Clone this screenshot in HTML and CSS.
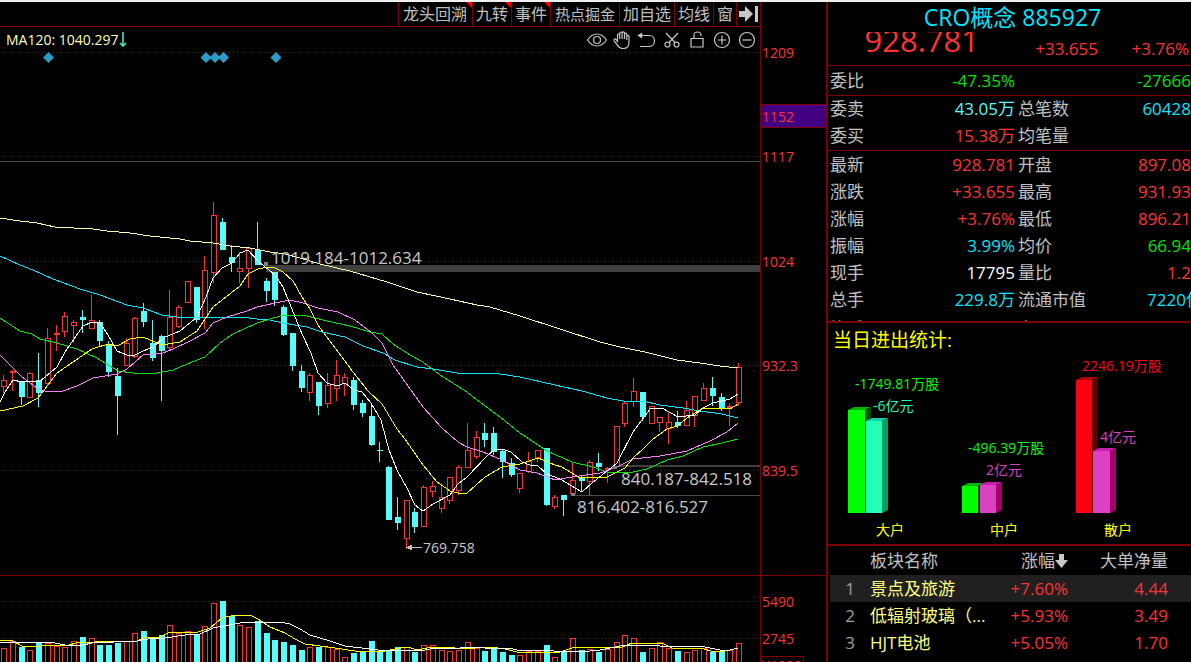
FILE: index.html
```html
<!DOCTYPE html>
<html lang="zh-CN">
<head>
<meta charset="utf-8">
<title>CRO概念 885927</title>
<link rel="stylesheet" href="styles.css">
</head>
<body>
<div class="app">
  <main class="chart-area">
    <nav class="toolbar" aria-label="图表工具">
      <button class="tool tool-wide flagged" type="button">龙头回溯</button>
      <button class="tool flagged" type="button">九转</button>
      <button class="tool flagged" type="button">事件</button>
      <button class="tool tool-small" type="button">热点掘金</button>
      <button class="tool" type="button">加自选</button>
      <button class="tool" type="button">均线</button>
      <button class="tool" type="button">窗</button>
      <button class="tool tool-icon" type="button" aria-label="收起侧栏">
        <svg width="20" height="16" viewBox="0 0 20 16"><path d="M0 5h6V0l8 8-8 8v-5H0zM16 0h3v16h-3z" fill="#c8c8c8"/></svg>
      </button>
    </nav>
    <div class="chart">
      <svg class="plot" viewBox="0 27 826 635" preserveAspectRatio="xMaxYMin slice" role="img" aria-label="K线图">
        <g class="grid">
          <path d="M1 52.5H760M1 156.5H760M1 261.5H760M1 365.5H760M1 470.5H760M1 601.5H760M1 638.5H760"/>
        </g>
        <g class="frame">
          <path d="M0 575.5H826M760.5 27V662"/>
        </g>
        <path class="gray-line" d="M0 161.5H760M572 495.5H760"/>
        <path class="gray-band" d="M266 265H760v7H266zM615 465H760v2H615z"/>
        <rect class="axis-mark" x="760.5" y="104.5" width="66" height="23"/>
        <rect class="axis-unit" x="761.5" y="656.5" width="42" height="20"/>
        <g class="axis-text">
          <text x="762" y="58">1209</text>
          <text x="762" y="122">1152</text>
          <text x="762" y="162">1117</text>
          <text x="762" y="267">1024</text>
          <text x="762" y="371">932.3</text>
          <text x="762" y="476">839.5</text>
          <text x="762" y="607">5490</text>
          <text x="762" y="644">2745</text>
          <text x="762" y="671">X1000</text>
        </g>
        <g class="diamonds">
          <path d="M48.500 52l5.500 5.500-5.500 5.500-5.500-5.500zM206 52l5.500 5.500-5.500 5.500-5.500-5.500zM215 52l5.500 5.500-5.500 5.500-5.500-5.500zM223.500 52l5.500 5.500-5.500 5.500-5.500-5.500zM276 52l5.500 5.500-5.500 5.500-5.500-5.500z"/>
        </g>
        <path id="upBars" class="up"/>
        <path id="downBars" class="down"/>
        <g class="ma">
          <polyline class="ma120" points="0,218 20,221 37,223 55,227 93,229 107,231 130,233 150,236 180,239 190,241 213,243 230,246 250,248 270,252 285,254 300,258 320,264 350,271 387,282 417,292 450,299 477,305 490,307 520,316 563,330 600,342 620,347 645,352 677,360 700,363 720,366 738,368"/>
          <polyline class="ma60" points="0,256 20,265 33,270 53,279 80,289 100,295 127,305 143,308 162,315 177,317 240,317 257,319 270,320 283,323 307,327 322,332 345,337 363,346 383,353 395,360 417,367 433,369 457,373 493,373 520,377 555,385 582,391 607,398 623,401 643,401 660,405 683,408 700,411 722,414 738,418"/>
          <polyline class="ma30" points="0,318 20,331 32,334 40,339 57,343 77,349 97,358 118,371 133,373 157,373 173,370 187,364 205,357 220,343 233,334 257,323 280,316 303,315 327,321 350,326 370,332 382,334 393,344 410,355 423,362 440,375 467,392 477,400 500,417 520,433 547,451 572,462 593,467 607,472 633,472 647,469 667,460 683,456 703,447 722,443 738,439"/>
          <polyline class="ma20" points="0,355 22,377 37,388 45,391 63,391 77,386 93,378 117,374 127,369 143,355 163,353 173,349 190,341 205,333 213,323 227,317 247,311 257,307 275,303 290,300 303,303 318,308 338,312 355,320 372,333 382,343 393,365 423,407 442,428 458,442 467,447 483,452 502,460 520,470 537,473 555,480 572,477 600,473 617,467 633,459 660,456 687,451 710,441 727,432 738,423"/>
          <polyline class="ma10" points="0,411 23,406 38,398 57,373 73,362 92,349 108,344 117,346 130,339 143,337 162,345 180,342 197,331 213,307 240,286 248,274 258,269 268,267 275,268 283,272 293,281 302,297 310,309 318,325 353,372 368,391 382,404 397,429 405,439 423,465 437,482 450,491 458,493 467,493 485,477 502,467 520,464 538,458 555,465 562,467 580,478 607,477 625,468 633,458 643,449 653,439 667,429 677,426 687,418 703,408 730,409 738,404"/>
          <polyline class="ma5" points="0,402 5,392 13,380 22,382 33,381 39,382 57,367 65,352 83,326 92,322 100,323 108,335 117,351 127,355 135,355 143,351 153,347 163,338 180,331 197,317 206,297 213,278 222,268 232,263 240,253 248,250 258,261 275,275 283,287 302,334 311,353 318,373 327,383 337,386 345,383 354,390 362,392 371,403 381,420 389,450 397,470 407,488 415,505 423,511 433,504 450,495 458,484 467,477 487,456 494,450 502,449 511,452 522,462 530,465 538,466 547,474 560,479 582,492 592,483 617,463 633,432 650,409 662,408 678,417 695,415 703,408 713,403 730,399 738,394"/>
          <polyline class="ma10" points="0,640 13,641 22,646 32,647 50,645 65,646 80,642 95,642 120,641 137,641 143,638 160,637 170,632 198,632 210,628 222,618 235,615 250,615 258,619 270,627 285,633 295,639 305,644 320,646 335,648 355,651 385,651 400,648 408,647 417,650 432,647 455,648 475,648 490,647 505,649 517,652 560,652 572,648 600,647 620,648 632,643 662,643 672,648 700,648 715,652 725,651"/>
          <polyline class="ma5" points="0,643 13,642 50,642 65,645 83,645 92,643 137,641 153,638 165,638 185,635 200,634 213,628 235,624 245,622 280,622 290,624 300,629 310,635 330,641 345,646 370,649 385,651 400,650 425,650 435,648 460,648 470,647 485,648 510,648 520,651 548,650 560,652 590,651 600,650 620,646 640,645 660,646 700,646 720,650 730,650 738,648"/>
        </g>
        <path class="anchors" d="M264 262h4v4h-4zM613 466h4v3h-4zM571 493h4v3h-4z"/>
        <path class="arrow" d="M406 547.500l6-3v2.500h10v1h-10v2.500z"/>
        <g class="notes">
          <text x="271" y="264">1019.184-1012.634</text>
          <text x="621" y="485">840.187-842.518</text>
          <text x="577" y="513">816.402-816.527</text>
          <text class="low" x="423" y="553">769.758</text>
        </g>
      </svg>
      <p class="legend">MA120: 1040.297<span class="trend">
        <svg width="8" height="16" viewBox="0 0 8 16"><path d="M4 0v14M1 11l3 3 3-3" fill="none" stroke="#32ffc8" stroke-width="1.500"/></svg></span></p>
      <div class="chart-tools">
        <button type="button" aria-label="显示"><svg viewBox="0 0 20 20"><path d="M.500 10Q4.500 4 10 4t9.500 6Q15.500 16 10 16T.500 10z"/><circle cx="10" cy="10" r="3.500"/></svg></button>
        <button type="button" aria-label="拖动"><svg viewBox="0 0 20 20"><path d="M5.500 12.500V5.200c0-1.600 2.200-1.600 2.200 0V9M7.700 9V3.200c0-1.600 2.400-1.600 2.400 0V9M10.100 9V2.900c0-1.500 2.400-1.500 2.400 0V9M12.500 9V4.200c0-1.500 2.300-1.500 2.300 0V10M14.800 10V6.500c0-1.400 2.200-1.400 2.200 0V12c0 4-1.800 6.500-5.500 6.500-3 0-4.700-1.200-6-3.200L2.200 10.800C1.300 9.300 3 8.400 4 9.500l1.500 2"/></svg></button>
        <button type="button" aria-label="撤销"><svg viewBox="0 0 20 20"><path d="M3 5.500h9.500c3 0 5 2.300 5 5.500s-2 5.500-5 5.500H3"/><path d="M4.500 3.500v4L1.500 5.500z" fill="#c8c8c8"/></svg></button>
        <button type="button" aria-label="剪切"><svg viewBox="0 0 20 20"><path d="M4 3l9.500 10M16 3L6.500 13"/><circle cx="5.500" cy="14.500" r="2.500"/><circle cx="14.500" cy="14.500" r="2.500"/></svg></button>
        <button type="button" aria-label="锁定"><svg viewBox="0 0 20 20"><path d="M4 8.500h12v8.500H4zM7 8.500V5c0-4 7-4 7 0v1"/></svg></button>
        <button type="button" aria-label="放大"><svg viewBox="0 0 20 20"><circle cx="10" cy="10" r="7.500"/><path d="M10 5.500v9M5.500 10h9"/></svg></button>
        <button type="button" aria-label="缩小"><svg viewBox="0 0 20 20"><circle cx="10" cy="10" r="7.500"/><path d="M5.500 10h9"/></svg></button>
      </div>
    </div>
  </main>

  <aside class="panel">
    <h1 class="name">CRO概念 885927</h1>
    <div class="price red"><strong>928.781</strong><span>+33.655</span><span>+3.76%</span></div>

    <dl class="quote ratio">
      <div><dt>委比</dt><dd class="green">-47.35%</dd></div>
      <div><dt></dt><dd class="green">-27666</dd></div>
    </dl>
    <dl class="quote orders">
      <div><dt>委卖</dt><dd class="aqua">43.05万</dd></div>
      <div><dt>总笔数</dt><dd class="cyan">60428</dd></div>
      <div><dt>委买</dt><dd class="red">15.38万</dd></div>
      <div><dt>均笔量</dt><dd></dd></div>
    </dl>
    <dl class="quote details">
      <div><dt>最新</dt><dd class="red">928.781</dd></div>
      <div><dt>开盘</dt><dd class="red">897.08</dd></div>
      <div><dt>涨跌</dt><dd class="red">+33.655</dd></div>
      <div><dt>最高</dt><dd class="red">931.93</dd></div>
      <div><dt>涨幅</dt><dd class="red">+3.76%</dd></div>
      <div><dt>最低</dt><dd class="red">896.21</dd></div>
      <div><dt>振幅</dt><dd class="cyan">3.99%</dd></div>
      <div><dt>均价</dt><dd class="green">66.94</dd></div>
      <div><dt>现手</dt><dd class="white">17795</dd></div>
      <div><dt>量比</dt><dd class="red">1.2</dd></div>
      <div><dt>总手</dt><dd class="cyan">229.8万</dd></div>
      <div><dt>流通市值</dt><dd class="cyan bleed">7220亿</dd></div>
      <div class="next"><dt>换手</dt><dd></dd></div>
      <div class="next"><dt>市盈</dt><dd></dd></div>
    </dl>

    <section class="flow">
      <h2>当日进出统计:</h2>
      <svg viewBox="828 357 363 187" role="img" aria-label="当日进出统计">
        <path fill="#00b400" d="M848 410l6-3h17l-6 3z"/><path fill="#005000" d="M865 410l6-3v103l-6 3z"/><path fill="#00ff00" d="M848 410h17v103h-17z"/>
        <path fill="#14d2a5" d="M866 421l6-3h16l-6 3z"/><path fill="#00a064" d="M882 421l6-3v92l-6 3z"/><path fill="#23ffb4" d="M866 421h16v92h-16z"/>
        <path fill="#00b400" d="M962 486l6-3h16l-6 3z"/><path fill="#005000" d="M978 486l6-3v27l-6 3z"/><path fill="#00ff00" d="M962 486h16v27h-16z"/>
        <path fill="#c81eaf" d="M980 485l6-3h16l-6 3z"/><path fill="#a5006e" d="M996 485l6-3v28l-6 3z"/><path fill="#dc41c3" d="M980 485h16v28h-16z"/>
        <path fill="#b4000a" d="M1076 380l6-3h16l-6 3z"/><path fill="#5f0000" d="M1092 380l6-3v133l-6 3z"/><path fill="#ff0010" d="M1076 380h16v133h-16z"/>
        <path fill="#c81eaf" d="M1093 451l6-3h17l-6 3z"/><path fill="#a5006e" d="M1110 451l6-3v62l-6 3z"/><path fill="#dc41c3" d="M1093 451h17v62h-17z"/>
        <g class="flow-text">
          <text x="855" y="389" fill="#00ff00">-1749.81万股</text>
          <text x="873" y="411" fill="#23ffb4">-6亿元</text>
          <text x="968" y="453" fill="#00ff00">-496.39万股</text>
          <text x="986" y="475" fill="#dc41c3">2亿元</text>
          <text x="1082" y="371" fill="#ff0010">2246.19万股</text>
          <text x="1100" y="442" fill="#dc41c3">4亿元</text>
          <text x="876" y="535" fill="#ffff00">大户</text>
          <text x="990" y="535" fill="#ffff00">中户</text>
          <text x="1104" y="535" fill="#ffff00">散户</text>
        </g>
      </svg>
    </section>

    <section class="sectors">
      <table>
        <colgroup><col class="c-no"><col><col class="c-pct"><col class="c-net"></colgroup>
        <thead><tr><th></th><th class="left">板块名称</th><th>涨幅<svg class="sort" width="13" height="14" viewBox="0 0 13 14"><path d="M4 0h5v6h4l-6.500 8L0 6h4z" fill="#c8c8c8"/></svg></th><th>大单净量</th></tr></thead>
        <tbody>
          <tr class="selected"><td>1</td><td>景点及旅游</td><td>+7.60%</td><td>4.44</td></tr>
          <tr><td>2</td><td>低辐射玻璃（...</td><td>+5.93%</td><td>3.49</td></tr>
          <tr><td>3</td><td>HJT电池</td><td>+5.05%</td><td>1.70</td></tr>
          <tr class="next"><td></td><td>培育钻石</td><td></td><td></td></tr>
        </tbody>
      </table>
    </section>
  </aside>
</div>
<script src="chart.js"></script>
</body>
</html>
```
FILE: styles.css
```css
* { box-sizing: border-box; }

body {
  margin: 0;
  background: #000;
  color: #c0c0c0;
  font: 17px/27px "Open Sans", "Noto Sans CJK SC", sans-serif;
}

button {
  padding: 0;
  border: 0;
  background: none;
  color: inherit;
  font: inherit;
}

.app {
  display: grid;
  grid-template-columns: minmax(0, 1fr) 365px;
  height: 100vh;
  overflow: hidden;
  border-top: 2px solid #f0f0f0;
}

.chart-area {
  display: flex;
  flex-direction: column;
  min-height: 0;
}

.toolbar {
  display: flex;
  justify-content: flex-end;
  flex: none;
  height: 25px;
  margin-right: 65px;
  border-right: 1px solid #800000;
  border-bottom: 1px solid #800000;
}

.tool {
  position: relative;
  padding: 0 3px;
  border-left: 1px solid #800000;
  font-size: 16px;
  line-height: 22px;
  white-space: nowrap;
}

.tool-wide { padding: 0 5px 0 4px; }
.tool-small { padding: 0 4px; font-size: 15px; }
.tool-icon { padding: 0 1px 0 2px; }
.tool-icon svg { display: block; }

.flagged::after {
  content: "";
  position: absolute;
  top: 0;
  right: 0;
  border-top: 6px solid #ff0000;
  border-left: 6px solid transparent;
}

.chart {
  position: relative;
  flex: 1;
  min-height: 0;
}

.plot {
  display: block;
  width: 100%;
  height: 100%;
}

.plot path, .plot polyline, .plot rect { shape-rendering: crispEdges; }
.grid path { stroke: #c80000; stroke-dasharray: 1 3; }
.frame path { stroke: #800000; }
.gray-line { stroke: #484848; }
.gray-band { fill: #404040; }
.axis-mark { fill: #400080; stroke: #800000; }
.axis-unit { fill: none; stroke: #800000; }
.axis-text { fill: #ff3232; font-size: 14px; }
.plot .diamonds path { fill: #2a9cc8; shape-rendering: auto; }
.up { fill: #000; stroke: #ff3232; }
.down { fill: #54fcfc; }
.ma polyline { fill: none; stroke-width: 1; }
.ma .ma120 { stroke: #ffffb4; }
.ma .ma60 { stroke: #00e6ff; }
.ma .ma30 { stroke: #00e600; }
.ma .ma20 { stroke: #ff80ff; }
.ma .ma10 { stroke: #ffff00; }
.ma .ma5 { stroke: #fff; }
.anchors { fill: #808080; }
.arrow { fill: #c0c0c0; }
.notes { fill: #c8c8c8; font-size: 17px; }
.notes .low { font-size: 14px; }

.legend {
  position: absolute;
  top: 3px;
  left: 6px;
  display: flex;
  align-items: center;
  margin: 0;
  color: #ffffb4;
  font-size: 14px;
  line-height: 20px;
}

.trend { display: flex; }

.chart-tools {
  position: absolute;
  top: 3px;
  right: 67px;
  display: flex;
}

.chart-tools button {
  display: flex;
  justify-content: center;
  width: 25px;
}

.chart-tools svg {
  width: 20px;
  height: 20px;
  fill: none;
  stroke: #c8c8c8;
  stroke-width: 1.2;
}

.panel {
  display: flex;
  flex-direction: column;
  min-height: 0;
  overflow: hidden;
  border-left: 2px solid #800000;
}

.name {
  flex: none;
  margin: 0;
  padding-left: 6px;
  color: #00e6ff;
  font-size: 23px;
  font-weight: 400;
  line-height: 30px;
  text-align: center;
}

.price {
  display: grid;
  flex: none;
  grid-template-columns: 151fr 119fr 93fr;
  height: 33px;
  overflow: hidden;
  text-align: right;
}

.price strong {
  font-size: 31px;
  font-weight: 400;
  line-height: 17px;
}

.price span { line-height: 33px; }
.price span:last-child { padding-right: 2px; }

.quote {
  display: grid;
  flex: none;
  grid-template-columns: 188fr 175fr;
  margin: 0;
  border-top: 1px solid #800000;
}

.quote div {
  display: flex;
  justify-content: space-between;
  height: 27px;
  white-space: nowrap;
}

.quote div:nth-child(odd) { padding: 0 1px 0 2px; }
.quote div:nth-child(even) { padding-left: 2px; }
.quote dd { margin: 0; }
.quote .bleed { margin-right: -12px; }
.ratio { height: 30px; padding-top: 1px; }
.orders { line-height: 25px; }
.details { height: 171px; overflow: hidden; }
.details .next { line-height: 31px; }

.red { color: #ff3232; }
.green { color: #00e600; }
.cyan { color: #00e6ff; }
.aqua { color: #54fcfc; }
.white { color: #fff; }

.flow {
  flex: none;
  border-top: 2px solid #800000;
}

.flow h2 {
  margin: 0;
  padding-left: 5px;
  color: #ffff00;
  font-size: 19px;
  font-weight: 400;
  line-height: 34px;
}

.flow svg {
  display: block;
  width: 100%;
}

.flow-text { font-size: 14px; }

.sectors {
  flex: 1;
  min-height: 0;
  padding-left: 2px;
  overflow: hidden;
  border-top: 2px solid #800000;
}

.sectors table {
  width: 100%;
  border-collapse: collapse;
  table-layout: fixed;
}

.c-no { width: 40px; }
.c-pct { width: 80px; }
.c-net { width: 123px; }
.sectors th, .sectors td {
  padding: 0;
  font-weight: 400;
  text-align: right;
  white-space: nowrap;
}
.sectors th { height: 29px; }
.sectors th.left { text-align: left; }
.sectors td { height: 27px; color: #ff3232; }
.sectors td:first-child { padding-right: 15px; color: #a0a0a0; }
.sectors td:nth-child(2) { color: #ffff80; text-align: left; }
.sectors th:last-child, .sectors td:last-child { padding-right: 23px; }
.sectors .next { line-height: 30px; }
.selected { background: #202020; }
.sort { vertical-align: -1px; }
```
FILE: chart.js
```js
// One row per session: direction, high, body top, body bottom, low, volume top.
const sessions = `
r 375 380 386 392 648;r 370 371 372 390 641;c 381 381 397 405 647;r 372 373 397 397 650
c 353 380 393 407 642;r 328 338 383 385 643;r 325 333 334 350 646;r 312 316 331 336 647
r 320 322 325 342 641;c 310 317 320 333 637;r 295 320 328 328 638;c 320 322 341 347 645
c 341 345 372 377 645;c 368 376 396 435 643;r 338 343 365 365 641;r 317 318 356 357 633
c 303 311 322 327 631;c 320 343 358 361 638;c 335 336 351 401 635;r 290 317 347 350 625
r 305 307 326 327 633;r 281 281 302 302 631;c 287 287 320 323 635;r 256 270 317 328 626
r 202 215 272 282 603;c 218 222 250 250 601;c 245 257 263 272 616;r 252 268 271 282 625
r 247 248 268 287 627;c 222 250 265 265 621;c 278 281 291 302 633;c 272 272 300 306 640
c 305 307 335 336 642;c 333 333 366 371 645;c 365 371 388 392 650;r 373 375 392 400 647
c 382 382 406 415 647;r 373 385 403 407 647;r 360 375 388 400 649;r 373 377 383 395 657
c 377 380 405 410 653;c 400 403 413 417 652;c 405 416 445 446 641;c 442 450 451 462 651
c 466 467 520 520 651;c 497 517 523 530 647;r 500 500 538 548 647;c 508 512 527 533 652
r 485 487 526 526 645;r 481 486 491 496 645;r 483 497 508 512 650;r 477 477 500 503 651
r 465 467 490 494 650;r 423 450 467 467 642;r 431 437 456 458 648;c 423 433 440 447 651
c 427 433 452 455 648;c 450 451 462 478 652;c 458 463 475 477 655;r 473 473 488 492 655
r 452 461 471 472 651;r 450 450 457 461 651;c 448 448 505 506 645;r 495 497 506 508 657
c 495 495 500 516 651;r 462 480 493 495 638;c 476 477 481 492 650;r 460 462 481 495 649
c 453 463 467 471 652;r 467 468 469 482 649;r 426 426 466 467 642;r 401 403 423 426 635
r 378 391 401 406 638;c 392 392 417 421 652;r 406 406 423 423 648;r 417 417 422 431 642
r 413 422 428 443 648;c 411 422 426 428 651;r 401 410 425 425 652;r 396 396 415 426 650
r 383 388 400 400 648;c 377 388 396 406 652;c 393 397 409 411 651;r 403 406 407 425 650
r 363 367 402 405 643`.trim().split(/[;\n]/).map(row => row.split(" "));

const pitch = 8.75;
const floor = 662;
let up = "";
let down = "";

sessions.forEach(([kind, ...values], i) => {
  const [high, top, bottom, low, volume] = values.map(Number);
  const x = Math.round(1 + i * pitch);
  if (kind === "r") {
    up += `M${x + 2.5} ${high}V${top}M${x + 2.5} ${bottom}V${low + 1}`;
    up += `M${x + .5} ${top + .5}h5V${bottom + .5}h-5z`;
    up += `M${x + .5} ${volume + .5}h5V${floor + 2}h-5z`;
  } else {
    down += `M${x + 2} ${high}h1V${low}h-1zM${x} ${top}h6V${bottom}h-6z`;
    down += `M${x} ${volume}h6V${floor}h-6z`;
  }
});

document.getElementById("upBars").setAttribute("d", up);
document.getElementById("downBars").setAttribute("d", down);
```
